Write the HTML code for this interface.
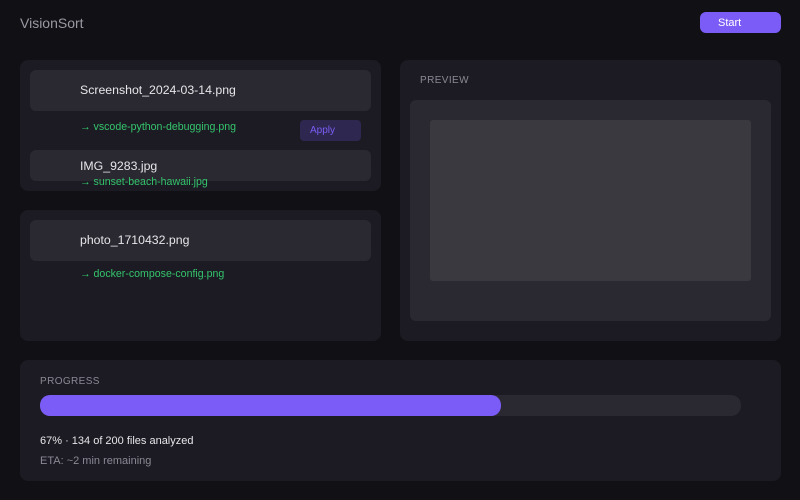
<!DOCTYPE html>
<html><head><style>
*{margin:0;padding:0;box-sizing:border-box}
body{width:800px;height:500px;background:#111015;font-family:"Liberation Sans",sans-serif;position:relative;overflow:hidden}
.a{position:absolute;white-space:nowrap}
.card{background:#1c1b23;border-radius:8px}
.item{background:#2a2931;border-radius:6px}
.t{color:#e6e6ea;font-size:12.3px}
.g{color:#34c46c;font-size:10.6px}
.lbl{color:#8a8994;font-size:10px;letter-spacing:.4px}
</style></head><body>
<div class="a" style="left:20px;top:15px;color:#9a99a3;font-size:14px">VisionSort</div>
<div class="a" style="left:700px;top:12px;width:81px;height:21px;background:#7c5cf6;border-radius:6px;color:#fff;font-size:11px;line-height:22px;padding-left:18px">Start</div>

<div class="a card" style="left:20px;top:60px;width:361px;height:131px"></div>
<div class="a item" style="left:30px;top:70px;width:341px;height:41px"></div>
<div class="a t" style="left:80px;top:83px">Screenshot_2024-03-14.png</div>
<div class="a g" style="left:80px;top:121px">→ vscode-python-debugging.png</div>
<div class="a" style="left:300px;top:120px;width:61px;height:21px;background:#2e2850;border-radius:4px;color:#7c5cf6;font-size:10px;line-height:22px;padding-left:10px">Apply</div>
<div class="a item" style="left:30px;top:150px;width:341px;height:31px"></div>
<div class="a t" style="left:80px;top:159px">IMG_9283.jpg</div>
<div class="a g" style="left:80px;top:176px">→ sunset-beach-hawaii.jpg</div>

<div class="a card" style="left:20px;top:210px;width:361px;height:131px"></div>
<div class="a item" style="left:30px;top:220px;width:341px;height:41px"></div>
<div class="a t" style="left:80px;top:233px">photo_1710432.png</div>
<div class="a g" style="left:80px;top:268px">→ docker-compose-config.png</div>

<div class="a card" style="left:400px;top:60px;width:381px;height:281px"></div>
<div class="a lbl" style="left:420px;top:75px">PREVIEW</div>
<div class="a item" style="left:410px;top:100px;width:361px;height:221px"></div>
<div class="a" style="left:430px;top:120px;width:321px;height:161px;background:#3a3940;border-radius:3px"></div>

<div class="a card" style="left:20px;top:360px;width:761px;height:121px"></div>
<div class="a lbl" style="left:40px;top:376px">PROGRESS</div>
<div class="a" style="left:40px;top:395px;width:701px;height:21px;background:#2a2931;border-radius:10px"></div>
<div class="a" style="left:40px;top:395px;width:461px;height:21px;background:#7c5cf6;border-radius:10px"></div>
<div class="a" style="left:40px;top:435px;color:#e6e6ea;font-size:11px">67% · 134 of 200 files analyzed</div>
<div class="a" style="left:40px;top:455px;color:#8a8994;font-size:11px">ETA: ~2 min remaining</div>
</body></html>
